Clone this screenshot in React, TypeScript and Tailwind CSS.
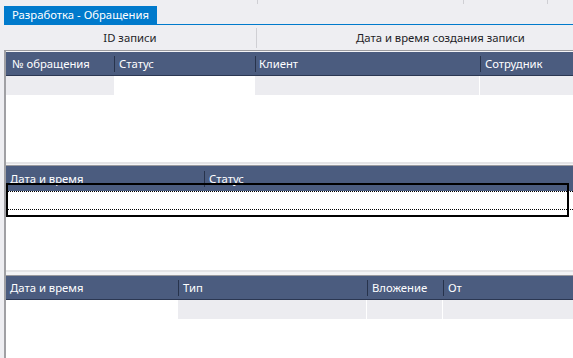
import React from 'react';

const HeaderSep = () => <div className="w-px h-[16px] bg-[#27334c] shrink-0" />;

export default function App() {
  return (
    <div className="w-[573px] h-[358px] overflow-hidden bg-[#eeeef2] text-[11.3px] leading-none whitespace-nowrap font-['Noto_Sans',sans-serif] flex flex-col">
      {/* top strip */}
      <div className="h-[6px] flex shrink-0">
        <div className="w-[257px]" />
        <div className="w-px h-[4px] bg-[#cfcfd4]" />
        <div className="w-[205px]" />
        <div className="w-px h-[4px] bg-[#cfcfd4]" />
        <div className="w-[83px]" />
        <div className="w-px h-[4px] bg-[#cfcfd4]" />
      </div>

      {/* tab */}
      <div className="flex pl-[4px] shrink-0">
        <div className="h-[18px] w-[153px] bg-[#007acc] text-white flex items-center pl-[8px]">
          Разработка - Обращения
        </div>
      </div>
      <div className="h-px ml-[4px] bg-[#007acc] shrink-0" />

      {/* group header */}
      <div className="h-[25px] flex items-center shrink-0 text-[#1e1e28]">
        <div className="w-[256px] flex justify-center pl-[4px]">ID записи</div>
        <div className="w-px h-[20px] bg-[#cfcfd4]" />
        <div className="pl-[99px]">Дата и время создания записи</div>
      </div>
      <div className="h-px ml-[4px] bg-[#9a9a9e] shrink-0" />

      <div className="flex-1 ml-[4px] border-l-2 border-[#a0a0a4] flex flex-col bg-white">
        {/* table 1 */}
        <div className="h-[25px] bg-[#4b5c7f] border-t border-t-[#f4f4f6] border-b border-[#2b3752] text-white flex items-center shrink-0">
          <div className="w-[108px] pl-[6px]">№ обращения</div>
          <HeaderSep />
          <div className="w-[140px] pl-[4px]">Статус</div>
          <HeaderSep />
          <div className="w-[224px] pl-[3px]">Клиент</div>
          <HeaderSep />
          <div className="pl-[4px]">Сотрудник</div>
        </div>
        <div className="h-[19px] flex shrink-0">
          <div className="w-[108px] bg-[#ececf0]" />
          <div className="w-[141px] bg-white" />
          <div className="w-[225px] bg-[#ececf0] border-r border-white" />
          <div className="flex-1 bg-[#ececf0]" />
        </div>
        <div className="h-[67px] shrink-0" />

        {/* splitter */}
        <div className="h-[4px] shrink-0 bg-[#f4f4f6] border-t-2 border-[#e4e4e6] border-b border-b-[#9a9a9e]" />

        {/* table 2 */}
        <div className="relative h-[104px] shrink-0">
          <div className="h-[25px] bg-[#4b5c7f] text-white flex items-center">
            <div className="w-[198px] pl-[4px]">Дата и время</div>
            <HeaderSep />
            <div className="pl-[4px]">Статус</div>
          </div>
          <div className="h-[19px] border-t border-b border-dotted border-black" />
          <div className="absolute left-0 top-[17px] w-[563px] h-[34px] border-2 border-black" />
        </div>

        {/* splitter */}
        <div className="h-[6px] shrink-0 bg-[#f4f4f6] border-t-2 border-[#e4e4e6] border-b border-b-[#9a9a9e]" />

        {/* table 3 */}
        <div className="h-[24px] bg-[#4b5c7f] border-b border-[#2b3752] text-white flex items-center shrink-0">
          <div className="w-[172px] pl-[4px]">Дата и время</div>
          <HeaderSep />
          <div className="w-[188px] pl-[4px]">Тип</div>
          <HeaderSep />
          <div className="w-[75px] pl-[4px]">Вложение</div>
          <HeaderSep />
          <div className="pl-[4px]">От</div>
        </div>
        <div className="h-[19px] flex shrink-0">
          <div className="w-[172px] bg-white" />
          <div className="w-[189px] bg-[#ececf0] border-r border-white" />
          <div className="w-[76px] bg-[#ececf0] border-r border-white" />
          <div className="flex-1 bg-[#ececf0]" />
        </div>
        <div className="flex-1" />
      </div>
    </div>
  );
}
